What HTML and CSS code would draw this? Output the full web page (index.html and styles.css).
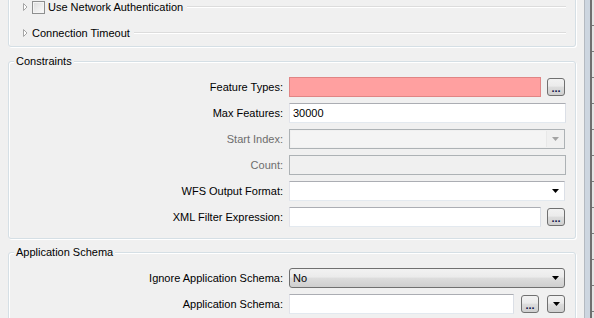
FILE: index.html
```html
<!DOCTYPE html>
<html lang="en">
<head>
  <meta charset="UTF-8">
  <title>Reader Parameters</title>
  <link rel="stylesheet" href="styles.css">
</head>
<body>
  <div class="window">
    <div class="panel">

      <div class="group group-cut">
        <div class="expander-row">
          <svg class="twisty" width="10" height="10" viewBox="0 0 10 10"><path d="M1.5 1.5 L5 5 L1.5 8.5 Z" fill="#fff" stroke="#a6a6a6"/></svg>
          <span class="checkbox"></span>
          <span class="row-text">Use Network Authentication</span>
          <span class="rule"></span>
        </div>
        <div class="expander-row">
          <svg class="twisty" width="10" height="10" viewBox="0 0 10 10"><path d="M1.5 1.5 L5 5 L1.5 8.5 Z" fill="#fff" stroke="#a6a6a6"/></svg>
          <span class="row-text">Connection Timeout</span>
          <span class="rule"></span>
        </div>
      </div>

      <div class="group">
        <div class="group-title">Constraints</div>
        <div class="form">
          <label>Feature Types:</label>
          <div class="field-row">
            <div class="input required"></div>
            <button class="tool-btn"><span class="dots">...</span></button>
          </div>

          <label>Max Features:</label>
          <div class="field-row">
            <div class="input">30000</div>
          </div>

          <label class="disabled">Start Index:</label>
          <div class="field-row">
            <div class="combo combo-disabled">
              <div class="combo-inner"></div>
              <svg class="arrow" width="7" height="4" viewBox="0 0 7 4"><path d="M0 0 H7 L3.5 4 Z" fill="#a3a3a3"/></svg>
            </div>
          </div>

          <label class="disabled">Count:</label>
          <div class="field-row">
            <div class="input input-disabled"></div>
          </div>

          <label>WFS Output Format:</label>
          <div class="field-row">
            <div class="combo">
              <div class="combo-inner"></div>
              <svg class="arrow" width="7" height="4" viewBox="0 0 7 4"><path d="M0 0 H7 L3.5 4 Z" fill="#000"/></svg>
            </div>
          </div>

          <label>XML Filter Expression:</label>
          <div class="field-row">
            <div class="input"></div>
            <button class="tool-btn"><span class="dots">...</span></button>
          </div>
        </div>
      </div>

      <div class="group">
        <div class="group-title">Application Schema</div>
        <div class="form">
          <label>Ignore Application Schema:</label>
          <div class="field-row">
            <div class="select-btn">
              <span class="select-text">No</span>
              <svg class="arrow" width="7" height="4" viewBox="0 0 7 4"><path d="M0 0 H7 L3.5 4 Z" fill="#000"/></svg>
            </div>
          </div>

          <label>Application Schema:</label>
          <div class="field-row">
            <div class="input"></div>
            <button class="tool-btn tool-gap"><span class="dots">...</span></button>
            <button class="tool-btn drop-btn">
              <svg width="7" height="4" viewBox="0 0 7 4"><path d="M0 0 H7 L3.5 4 Z" fill="#000"/></svg>
            </button>
          </div>
        </div>
      </div>

    </div>
    <div class="scrollbar">
      <div class="sb-track"></div>
      <div class="sb-edge"></div>
      <div class="sb-next"></div>
    </div>
  </div>
</body>
</html>
```

FILE: styles.css
```css
html, body {
  margin: 0;
  height: 100%;
  overflow: hidden;
}

body {
  font-family: 'Liberation Sans', Arial, sans-serif;
  font-size: 11px;
  color: #000;
  background-color: #f0f0f0;
}

.window {
  display: flex;
  height: 318px;
}

.panel {
  flex: 1;
  overflow: hidden;
}

.group {
  position: relative;
  margin: 14px 8px 0 8px;
  border: 1px solid #d5dfe5;
  border-radius: 3px;
  box-shadow: inset 1px 1px 0 #fff, 1px 1px 0 #fff;
  padding: 15px 9px 11px 0;
}

.group + .group + .group {
  margin-top: 13px;
}

.group-cut {
  margin-top: -7px;
  padding: 0 9px 0 0;
}

.group-title {
  position: absolute;
  top: -8px;
  left: 5px;
  padding: 0 2px;
  background-color: #f0f0f0;
  line-height: 14px;
}

/* collapsible rows */

.expander-row {
  display: flex;
  align-items: center;
  height: 26px;
  padding-left: 13px;
}

.twisty {
  flex: none;
}

.checkbox {
  flex: none;
  width: 11px;
  height: 11px;
  margin: 0 3px 0 0;
  border: 1px solid #8e8f8f;
  background: linear-gradient(135deg, #dcdcdc, #fbfbfb);
  box-shadow: inset 0 0 0 1px #f4f4f4;
}

.row-text {
  flex: none;
  white-space: nowrap;
}

.rule {
  flex: 1;
  margin-left: 4px;
  border-top: 1px solid #dcdcdc;
  border-bottom: 1px solid #fff;
}

/* form grid */

.form {
  display: grid;
  grid-template-columns: 274px 1fr;
  grid-auto-rows: 20px;
  column-gap: 6px;
  row-gap: 6px;
}

.form label {
  text-align: right;
  line-height: 20px;
  white-space: nowrap;
}

.form label.disabled {
  color: #6d6d6d;
}

.field-row {
  display: flex;
  align-items: center;
  padding-right: 1px;
}

.input {
  flex: 1;
  box-sizing: border-box;
  height: 20px;
  border: 1px solid #abadb3;
  border-left-color: #e2e3ea;
  border-right-color: #dbdfe6;
  border-bottom-color: #e3e9ef;
  background-color: #fff;
  padding: 0 3px;
  line-height: 18px;
  margin-right: -1px;
}

.input.required {
  background-color: #ffa0a0;
  border-color: #e08585;
}

.input.input-disabled {
  background-color: #f0f0f0;
  border-color: #adb2b5;
}

.tool-btn {
  flex: none;
  box-sizing: border-box;
  width: 18px;
  height: 18px;
  margin-left: 7px;
  padding: 0;
  border: 1px solid #707070;
  border-radius: 3px;
  background: linear-gradient(#f2f2f2 0%, #ebebeb 45%, #dddddd 50%, #cfcfcf 100%);
  display: flex;
  align-items: center;
  justify-content: center;
  overflow: hidden;
}

.dots {
  font-family: 'Liberation Sans', Arial, sans-serif;
  font-size: 11px;
  font-weight: bold;
  line-height: 11px;
  color: #10104a;
  margin-top: 2px;
  letter-spacing: 0;
}

.tool-gap {
  margin-left: 8px;
}

.drop-btn {
  margin-left: 8px;
}

.combo {
  flex: 1;
  box-sizing: border-box;
  height: 20px;
  border: 1px solid #abadb3;
  border-left-color: #e2e3ea;
  border-right-color: #dbdfe6;
  border-bottom-color: #e3e9ef;
  background-color: #fff;
  display: flex;
  align-items: center;
}

.combo-inner {
  flex: 1;
  height: 16px;
}

.combo .arrow {
  margin: 0 5px;
}

.combo-disabled {
  background-color: #f0f0f0;
  border-color: #adb2b5;
}

.combo-disabled .combo-inner {
  margin-left: 1px;
  background-color: #f4f4f4;
  border-right: 1px solid #e8e8e8;
}

.select-btn {
  flex: 1;
  box-sizing: border-box;
  height: 20px;
  border: 1px solid #707070;
  border-radius: 3px;
  background: linear-gradient(#f2f2f2 0%, #ebebeb 45%, #dddddd 50%, #cfcfcf 100%);
  display: flex;
  align-items: center;
  padding: 0 5px 0 3px;
}

.select-text {
  flex: 1;
}

/* right edge */

.scrollbar {
  flex: none;
  width: 10px;
  display: flex;
  border-left: 1px solid #b4bac1;
  box-sizing: border-box;
}

.sb-track {
  width: 5px;
  background-color: #cdd6e0;
}

.sb-edge {
  width: 2px;
  background-color: #6f6f6f;
}

.sb-next {
  flex: 1;
  background: repeating-linear-gradient(#e4e4e4 0 25px, #7a7a7a 25px 26px);
}
```
